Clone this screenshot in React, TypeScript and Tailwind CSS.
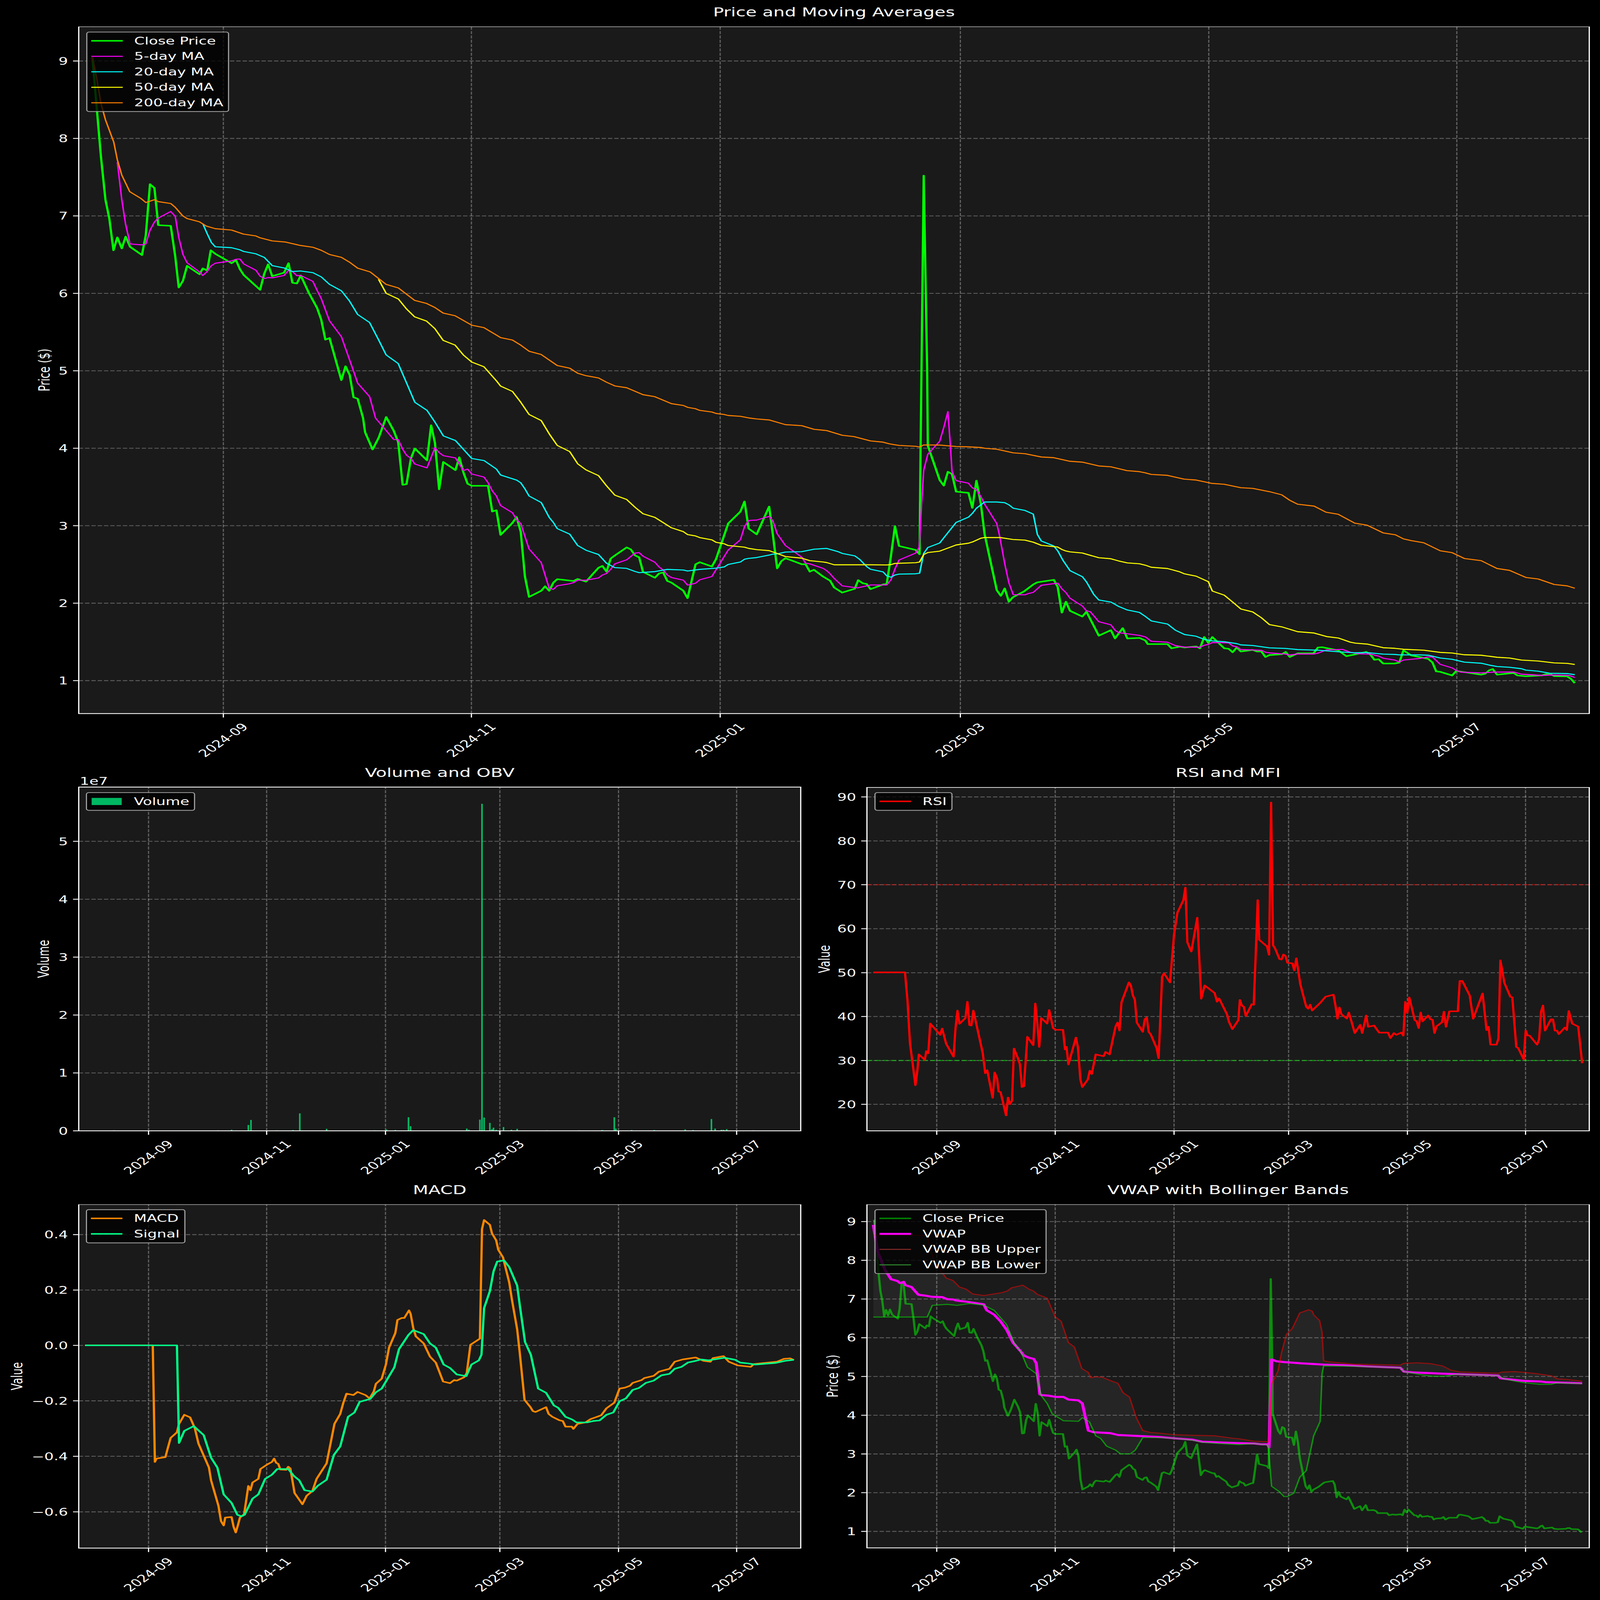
import type { ReactNode } from "react";

type Pt = [number, number];

// traced off crops of the plots, each crop has its own origin and scale
const crop = (ox: number, oy: number, sx: number, sy: number) => (pts: Pt[]): Pt[] =>
  pts.map(([x, y]) => [ox + x * sx, oy + y * sy]);
const z7 = crop(220, 200, 1300 / 1568, 1500 / 1568);
const z8 = crop(1100, 1300, 1300 / 1568, 1300 / 1568);
const z2 = crop(2300, 1500, 1000 / 1568, 1100 / 1568);
const z9 = crop(3200, 1900, 1270 / 1568, 1000 / 1568);
const zRsi = crop(2300, 3130, 2170 / 1568, 1600 / 1568);
const zVwap = crop(2300, 4850, 2170 / 1568, 1650 / 1568);
const zLeft = crop(0, 4700, 2300 / 1568, 1800 / 1568);

const close: Pt[] = [
  ...z7([[46,34],[60,240],[75,460],[90,640],[103,720],[117,855],[130,800],[145,847],[158,797],[173,840],[213,875],[226,790],[240,574],[255,590],[268,748],[310,751],[325,880],[337,1013],[351,985],[365,921],[407,957],[418,932],[433,941],[445,855],[460,870],[515,910],[530,897],[543,935],[556,960],[611,1023],[625,955],[638,915],[652,965],[692,950],[707,910],[720,993],[735,996],[748,962],[775,1035],[803,1100],[817,1150],[831,1235],[845,1228],[860,1295],[885,1407],[899,1348],[913,1385],[926,1480],[940,1486],[958,1568]]),
  [1020,1758],[1041,1828],[1058,1780],[1079,1696],
  ...z8([[0,545],[15,600],[30,810],[43,807],[58,680],[71,632],[112,690],[126,518],[139,605],[153,832],[167,698],[208,738],[221,675],[235,750],[249,805],[263,815],[318,815],[332,941],[346,935],[360,1056],[400,997],[414,968],[428,1040],[442,1260],[456,1360],[497,1330],[510,1308],[524,1330],[538,1290],[551,1273],[606,1282],[620,1272],[648,1285],[690,1217],[703,1208],[717,1236],[731,1172],[745,1157],[785,1117],[799,1127],[813,1156],[827,1166],[840,1237],[880,1266],[894,1245],[908,1240],[922,1282],[936,1290],[976,1330],[990,1366],[1017,1200],[1031,1190],[1072,1211],[1086,1175],[1127,1000],[1168,942],[1182,892],[1196,1025],[1223,1053],[1265,917],[1278,1060],[1292,1220],[1306,1185],[1320,1170],[1375,1200],[1388,1200],[1402,1236],[1416,1227]]),
  ...z2([[0,1205],[30,1228],[48,1268],[83,1297],[138,1275],[153,1225],[173,1243],[190,1247],[207,1277],[262,1250],[278,1247],[295,1100],[314,912],[332,1027],[405,1050],[422,1075],[426,500],[440,-1120],[455,0],[458,445],[510,645],[528,677],[546,597],[564,610],[582,712],[636,719],[653,806],[671,648],[690,780],[707,960],[760,1283],[778,1316],[795,1273],[813,1350],[830,1325],[880,1290],[920,1250],[937,1238],[1010,1223],[1027,1265],[1045,1413],[1063,1350],[1081,1403],[1135,1436],[1153,1408],[1185,1490],[1207,1547],[1260,1515],[1278,1563],[1312,1503],[1332,1563],[1385,1560]]),
  ...z9([[0,1105],[8,1128],[76,1128],[90,1155],[118,1145],[135,1150],[175,1143],[188,1155],[203,1083],[217,1120],[231,1083],[272,1155],[287,1158],[301,1180],[315,1150],[329,1175],[370,1165],[385,1175],[400,1175],[414,1210],[428,1198],[470,1193],[484,1178],[498,1210],[525,1187],[580,1187],[595,1150],[610,1148],[665,1168],[693,1205],[735,1190],[762,1178],[776,1195],[790,1228],[805,1225],[820,1252],[860,1252],[876,1246],[890,1168],[917,1200],[975,1222],[990,1245],[1003,1302],[1017,1305],[1058,1328],[1072,1300],[1100,1307],[1158,1323],[1172,1317],[1186,1295],[1198,1287],[1213,1323],[1270,1312],[1283,1328],[1312,1333],[1368,1328],[1380,1320],[1395,1318],[1410,1332],[1455,1334],[1468,1350],[1481,1377]]),
];

const ma5: Pt[] = [
  ...z7([[130,480],[145,640],[158,745],[173,828],[213,832],[226,828],[240,770],[255,735],[268,718],[310,690],[325,710],[337,800],[351,872],[365,908],[407,947],[418,962],[433,945],[445,922],[460,910],[515,900],[530,893],[543,892],[556,913],[597,940],[611,965],[625,975],[638,971],[652,972],[692,962],[707,940],[720,945],[735,963],[748,962],[789,987],[803,1025],[817,1060],[845,1155],[885,1222],[925,1365],[940,1420],[980,1477],[1000,1568]]),
  ...z8([[0,588],[15,588],[30,635],[43,665],[58,680],[71,708],[112,727],[139,628],[153,652],[167,667],[208,678],[235,740],[249,733],[263,757],[304,772],[318,800],[332,840],[346,865],[360,912],[400,947],[414,980],[428,1000],[456,1125],[497,1192],[524,1318],[538,1323],[551,1305],[590,1296],[606,1290],[620,1278],[648,1278],[690,1267],[703,1253],[717,1245],[731,1225],[745,1198],[785,1178],[813,1145],[827,1143],[840,1160],[880,1190],[894,1213],[908,1228],[922,1253],[936,1265],[976,1278],[990,1302],[1017,1293],[1031,1276],[1072,1260],[1127,1130],[1168,1080],[1182,1015],[1196,985],[1223,983],[1265,965],[1278,988],[1292,1050],[1320,1108],[1375,1165],[1388,1195],[1402,1198]]),
  ...z2([[0,1157],[15,1170],[30,1188],[48,1215],[83,1258],[150,1270],[207,1253],[278,1253],[297,1222],[314,1160],[332,1108],[405,1068],[420,1035],[430,800],[440,588],[458,495],[510,420],[528,340],[546,248],[556,430],[564,595],[582,648],[636,663],[653,690],[671,700],[690,740],[707,785],[760,897],[772,965],[795,1130],[813,1240],[832,1309],[884,1310],[900,1302],[920,1296],[955,1255],[1027,1242],[1045,1275],[1063,1297],[1081,1330],[1135,1375],[1153,1403],[1170,1408],[1207,1466],[1260,1484],[1278,1515],[1295,1530],[1385,1545]]),
  ...z9([[0,1082],[20,1110],[76,1116],[104,1138],[135,1147],[188,1148],[203,1135],[217,1130],[231,1118],[287,1120],[301,1140],[315,1145],[329,1163],[370,1165],[400,1168],[414,1180],[428,1184],[484,1192],[498,1198],[525,1191],[580,1191],[595,1186],[625,1165],[680,1162],[707,1180],[735,1190],[775,1192],[805,1205],[820,1218],[860,1230],[876,1242],[890,1230],[945,1220],[975,1210],[990,1210],[1017,1257],[1058,1280],[1072,1295],[1088,1307],[1158,1312],[1200,1307],[1270,1306],[1297,1320],[1368,1328],[1395,1325],[1455,1327],[1468,1332],[1481,1341]]),
];

const ma20: Pt[] = [
  ...z7([[418,742],[433,785],[447,822],[460,840],[515,844],[543,853],[556,860],[597,870],[625,885],[652,920],[692,930],[720,945],[748,943],[789,950],[817,968],[845,1000],[885,1027],[912,1070],[940,1128],[980,1162],[1010,1235],[1036,1300]]),
  ...z8([[15,215],[43,310],[71,405],[112,445],[140,505],[167,570],[208,593],[263,681],[304,691],[346,733],[360,762],[414,787],[428,800],[442,830],[456,865],[497,897],[524,970],[538,995],[551,1025],[593,1052],[620,1108],[648,1131],[690,1152],[717,1195],[745,1216],[785,1220],[813,1235],[827,1241],[880,1236],[922,1225],[976,1228],[990,1233],[1031,1225],[1086,1219],[1113,1213],[1127,1201],[1168,1189],[1182,1175],[1196,1171],[1223,1167],[1265,1155],[1278,1150],[1292,1149],[1320,1140],[1375,1138],[1416,1126]]),
  ...z2([[0,1042],[15,1041],[65,1060],[83,1070],[138,1084],[160,1105],[190,1146],[207,1162],[262,1177],[278,1200],[297,1208],[314,1195],[332,1190],[405,1188],[422,1185],[440,1070],[458,1036],[510,1010],[528,980],[582,890],[636,860],[653,838],[671,808],[707,772],[760,772],[795,776],[813,788],[832,808],[884,821],[920,842],[938,960],[955,998],[1010,1027],[1027,1055],[1050,1110],[1081,1170],[1135,1205],[1153,1235],[1185,1308],[1207,1340],[1260,1352],[1295,1378],[1332,1398],[1385,1412]]),
  ...z9([[0,952],[20,980],[76,1000],[104,1040],[135,1067],[175,1078],[203,1098],[231,1108],[272,1113],[315,1125],[329,1133],[370,1137],[428,1152],[484,1156],[525,1163],[595,1167],[665,1177],[720,1183],[762,1182],[820,1192],[860,1194],[876,1197],[945,1197],[975,1199],[990,1205],[1017,1217],[1058,1225],[1100,1243],[1158,1250],[1186,1262],[1213,1271],[1256,1276],[1297,1285],[1312,1294],[1355,1301],[1395,1314],[1455,1316],[1481,1323]]),
];

const ma50: Pt[] = [
  ...z7([[1010,978],[1036,1038],[1077,1062],[1105,1105],[1132,1138],[1172,1156],[1200,1188],[1228,1238],[1268,1258],[1296,1300]]),
  ...z8([[263,208],[304,231],[346,300],[360,326],[400,352],[428,405],[456,465],[497,495],[524,560],[551,617],[593,647],[620,707],[648,737],[690,765],[717,815],[745,861],[785,882],[813,920],[840,952],[880,970],[936,1021],[976,1040],[990,1054],[1017,1061],[1031,1069],[1072,1080],[1086,1092],[1113,1099],[1127,1108],[1182,1116],[1196,1122],[1223,1128],[1265,1133],[1292,1147],[1320,1162],[1375,1170],[1402,1182]]),
  ...z2([[0,1120],[15,1123],[48,1136],[138,1136],[207,1136],[278,1137],[297,1135],[314,1128],[405,1124],[422,1120],[440,1077],[458,1065],[510,1057],[582,1021],[636,1011],[653,1004],[690,982],[707,978],[775,978],[830,989],[884,993],[920,1005],[955,1023],[1027,1033],[1045,1047],[1063,1056],[1081,1061],[1135,1068],[1207,1095],[1260,1101],[1295,1114],[1332,1125],[1385,1130]]),
  ...z9([[0,625],[20,638],[76,646],[118,667],[135,680],[175,695],[217,730],[231,790],[272,816],[301,860],[329,904],[370,923],[400,960],[428,1004],[470,1018],[525,1049],[580,1057],[625,1080],[665,1089],[707,1116],[725,1122],[765,1128],[820,1151],[860,1155],[890,1161],[960,1167],[1017,1181],[1058,1185],[1100,1196],[1158,1199],[1213,1212],[1256,1217],[1297,1230],[1355,1236],[1410,1248],[1455,1251],[1481,1258]]),
];

const ma200: Pt[] = [
  ...z7([[46,34],[60,120],[75,232],[90,300],[118,395],[130,470],[145,535],[172,606],[210,635],[226,652],[255,640],[268,648],[310,656],[325,672],[350,708],[365,720],[407,734],[430,752],[460,763],[515,769],[555,786],[597,794],[611,802],[652,815],[697,820],[745,834],[789,842],[817,855],[845,873],[885,885],[912,905],[940,931],[982,947],[1036,1000],[1077,1015],[1105,1042],[1132,1068],[1172,1081],[1200,1098],[1228,1122],[1268,1133]]),
  ...z8([[263,27],[304,39],[360,88],[400,100],[428,125],[456,155],[497,171],[551,225],[593,238],[620,263],[648,275],[690,286],[717,307],[745,325],[785,334],[840,368],[880,378],[936,412],[976,421],[990,430],[1017,437],[1031,445],[1072,453],[1086,460],[1113,465],[1127,470],[1168,474],[1196,482],[1223,487],[1265,492],[1320,515],[1375,520],[1416,538]]),
  ...z2([[0,356],[15,358],[83,385],[135,393],[207,418],[262,425],[290,435],[332,444],[405,449],[422,453],[440,441],[510,442],[582,450],[636,452],[690,456],[710,461],[760,466],[832,487],[884,492],[955,511],[1010,515],[1081,536],[1135,541],[1207,563],[1260,568],[1330,590],[1385,596]]),
  ...z9([[0,36],[20,46],[76,52],[133,76],[175,82],[228,103],[272,109],[329,131],[370,135],[428,156],[470,176],[497,210],[525,236],[582,248],[623,287],[665,300],[722,357],[765,370],[820,419],[862,431],[890,457],[917,468],[960,482],[1017,533],[1058,545],[1100,582],[1158,596],[1213,646],[1256,658],[1312,703],[1355,713],[1410,748],[1455,757],[1481,772]]),
];

const rsi = zRsi([[101,808],[165,808],[170,920],[175,1090],[181,1180],[186,1258],[190,1200],[193,1135],[205,1157],[208,1122],[212,1130],[216,1012],[236,1057],[240,1032],[248,1092],[263,1144],[267,1030],[271,960],[275,1013],[287,990],[291,925],[295,1018],[299,1020],[303,960],[322,1130],[327,1210],[331,1198],[342,1308],[346,1207],[351,1232],[354,1283],[358,1285],[369,1378],[373,1307],[377,1333],[381,1320],[385,1112],[393,1150],[397,1175],[401,1265],[405,1262],[412,1065],[424,1098],[428,932],[432,1010],[436,1105],[440,990],[452,1012],[456,958],[464,1030],[469,1037],[484,1037],[488,1115],[491,1105],[495,1175],[510,1068],[514,1105],[519,1235],[523,1265],[534,1235],[538,1200],[542,1213],[550,1135],[566,1142],[570,1125],[578,1135],[590,1025],[594,1008],[598,1040],[602,928],[617,848],[621,860],[625,900],[629,917],[633,1008],[645,1045],[649,995],[653,988],[657,1045],[661,1055],[673,1110],[677,1150],[684,825],[688,812],[700,848],[708,660],[715,570],[727,520],[731,470],[735,688],[743,725],[755,590],[759,750],[763,913],[770,860],[790,890],[795,925],[799,912],[815,975],[819,1005],[826,1034],[838,998],[841,918],[845,940],[849,945],[853,982],[865,935],[869,937],[873,735],[877,520],[880,678],[896,705],[900,738],[904,131],[908,700],[912,712],[921,755],[925,757],[929,737],[933,742],[937,770],[947,772],[951,800],[955,752],[963,855],[975,945],[979,953],[983,937],[987,960],[1003,930],[1014,905],[1030,897],[1034,940],[1038,993],[1042,948],[1046,975],[1057,992],[1061,968],[1073,1050],[1084,1017],[1088,1050],[1096,980],[1100,1025],[1112,1020],[1122,1048],[1140,1048],[1145,1070],[1152,1050],[1157,1057],[1167,1048],[1171,1060],[1175,925],[1179,970],[1183,908],[1194,998],[1198,1003],[1202,1030],[1206,968],[1210,1003],[1221,980],[1226,995],[1230,997],[1234,1050],[1238,1023],[1249,1007],[1253,965],[1257,1025],[1264,963],[1281,963],[1285,842],[1290,842],[1305,900],[1312,993],[1331,892],[1339,1038],[1343,1025],[1347,1096],[1359,1096],[1363,1072],[1367,760],[1375,850],[1387,905],[1391,907],[1399,1105],[1403,1110],[1414,1155],[1418,1040],[1422,1060],[1426,1060],[1441,1096],[1445,1075],[1449,965],[1453,940],[1457,1040],[1469,995],[1473,995],[1477,1040],[1481,1040],[1485,1054],[1497,1028],[1501,1038],[1505,962],[1512,1012],[1524,1024],[1532,1170]]);

const macd = zLeft([[162,672],[291,672],[295,1085],[298,1073],[315,1068],[319,1040],[325,1000],[337,980],[341,950],[351,918],[362,927],[371,965],[378,1020],[398,1105],[402,1150],[416,1240],[421,1295],[426,1310],[429,1282],[441,1280],[445,1315],[449,1335],[453,1310],[457,1282],[465,1270],[473,1170],[477,1185],[481,1158],[492,1145],[496,1110],[508,1095],[518,1085],[522,1073],[526,1088],[530,1092],[534,1112],[545,1113],[549,1102],[553,1108],[561,1195],[576,1235],[580,1220],[584,1205],[595,1188],[603,1145],[622,1090],[637,950],[648,915],[654,875],[660,843],[673,848],[681,837],[696,848],[704,860],[712,835],[716,808],[727,790],[735,740],[741,680],[753,628],[757,582],[765,575],[770,575],[779,548],[782,560],[787,610],[792,640],[807,665],[819,712],[830,733],[844,800],[857,806],[865,795],[870,797],[884,785],[889,770],[896,670],[914,648],[918,260],[922,228],[933,245],[937,275],[945,300],[949,333],[958,360],[964,405],[970,450],[975,510],[985,615],[990,700],[999,865],[1010,890],[1015,905],[1020,908],[1040,891],[1045,915],[1052,925],[1065,937],[1072,940],[1077,960],[1089,960],[1092,968],[1100,950],[1115,945],[1125,933],[1145,920],[1155,895],[1170,875],[1180,825],[1190,822],[1200,815],[1205,805],[1222,795],[1227,788],[1245,780],[1255,765],[1275,755],[1285,730],[1300,722],[1325,715],[1340,727],[1353,730],[1358,717],[1378,710],[1388,730],[1405,743],[1430,748],[1436,738],[1480,730],[1493,720],[1505,718],[1512,724]]);

const signal = zLeft([[162,672],[337,672],[341,1018],[351,975],[369,958],[388,990],[402,1070],[414,1105],[426,1200],[441,1230],[452,1272],[460,1278],[466,1272],[481,1215],[492,1200],[505,1145],[518,1130],[528,1110],[549,1110],[560,1135],[570,1150],[580,1185],[595,1190],[605,1170],[622,1148],[636,1060],[648,1030],[663,925],[675,910],[685,872],[705,862],[716,838],[727,825],[735,800],[751,750],[760,685],[778,635],[787,618],[807,632],[819,665],[830,680],[845,740],[857,752],[870,775],[888,781],[898,740],[912,725],[917,705],[922,540],[933,480],[940,410],[947,375],[960,371],[970,395],[985,460],[990,530],[1000,660],[1011,705],[1025,825],[1040,840],[1055,885],[1063,893],[1077,925],[1090,935],[1098,945],[1118,945],[1130,940],[1142,938],[1155,918],[1168,910],[1180,870],[1192,860],[1205,830],[1217,823],[1230,805],[1245,797],[1260,778],[1275,773],[1285,755],[1298,748],[1310,733],[1325,727],[1335,722],[1350,725],[1380,716],[1400,723],[1410,733],[1425,736],[1438,740],[1478,734],[1495,727],[1512,723]]);

const vwap = zVwap([[101,125],[110,230],[125,300],[137,335],[150,342],[155,350],[162,345],[166,358],[178,365],[192,395],[205,398],[220,403],[240,404],[250,412],[262,413],[268,417],[290,422],[324,432],[330,455],[345,472],[358,498],[370,530],[383,580],[397,610],[405,630],[415,638],[425,643],[430,660],[437,780],[442,783],[455,785],[470,790],[485,790],[495,800],[515,803],[523,815],[535,920],[545,926],[580,930],[595,937],[640,941],[680,945],[710,950],[745,955],[765,963],[790,965],[830,968],[870,970],[885,973],[897,973],[900,985],[905,645],[915,652],[930,655],[965,660],[1010,665],[1050,667],[1100,672],[1165,677],[1172,692],[1190,695],[1250,700],[1300,703],[1363,707],[1367,718],[1395,724],[1415,728],[1448,730],[1460,733],[1532,737]]);

const bbUpper = zVwap([[101,165],[210,165],[215,210],[225,270],[248,330],[262,340],[275,365],[288,373],[302,392],[325,398],[340,393],[360,387],[372,380],[380,368],[403,358],[415,373],[424,380],[432,393],[452,408],[468,480],[480,497],[495,580],[507,597],[522,680],[535,695],[540,716],[550,712],[563,714],[580,727],[595,737],[605,773],[618,790],[632,870],[645,920],[660,927],[680,930],[710,936],[745,938],[790,940],[825,949],[840,952],[870,961],[900,963],[905,740],[918,690],[925,620],[935,548],[947,525],[962,465],[980,453],[987,458],[990,472],[1002,495],[1007,540],[1010,650],[1020,654],[1060,661],[1070,663],[1165,667],[1172,660],[1200,658],[1225,661],[1250,670],[1268,687],[1285,693],[1340,697],[1363,698],[1370,694],[1395,692],[1415,695],[1440,700],[1470,708],[1482,720],[1500,722],[1532,729]]);

const bbLower = zVwap([[101,481],[210,481],[220,436],[250,432],[270,436],[295,429],[324,435],[345,455],[370,510],[385,580],[400,620],[412,675],[430,700],[440,785],[452,815],[462,855],[485,882],[515,884],[523,870],[537,885],[550,940],[560,950],[572,980],[590,995],[600,1010],[620,1010],[630,995],[645,947],[680,947],[710,950],[745,957],[765,965],[800,970],[840,974],[870,970],[898,976],[905,1135],[920,1155],[930,1175],[937,1175],[950,1162],[962,1100],[975,1075],[990,940],[1003,885],[1007,700],[1010,670],[1070,671],[1165,677],[1172,692],[1190,698],[1210,705],[1230,710],[1255,710],[1280,702],[1340,706],[1363,708],[1375,720],[1400,730],[1415,735],[1445,741],[1470,741],[1480,736],[1532,738]]);

// same close series, moved onto the VWAP axes
const closeVwap: Pt[] = close.map(([x, y]) => [2616.7 + (x - 624) / 2.096, 4968.5 + (y - 248) / 2.001]);

// [crop x, crop y] of each bar top in the volume crop
const volumeBars: Pt[] = [[170,1484],[217,1483],[223,1484],[300,1484],[415,1483],[420,1484],[430,1484],[441,1481],[473,1465],[478,1448],[527,1483],[558,1482],[571,1426],[622,1478],[713,1483],[736,1480],[753,1482],[778,1439],[782,1469],[889,1477],[893,1481],[914,1447],[918,387],[922,1440],[933,1458],[937,1479],[940,1474],[945,1481],[959,1472],[974,1481],[985,1478],[1042,1483],[1103,1483],[1147,1482],[1170,1439],[1173,1477],[1203,1482],[1246,1482],[1305,1480],[1320,1482],[1355,1445],[1362,1477],[1374,1481],[1378,1481],[1384,1479],[1435,1483]];

const toPath = (pts: Pt[]) => pts.map(([x, y]) => `${x.toFixed(1)},${y.toFixed(1)}`).join(" ");

const dateLabels = ["2024-09", "2024-11", "2025-01", "2025-03", "2025-05", "2025-07"];
const topTicks = [624, 1317, 2012, 2683, 3377, 4070];
const leftTicks = [415, 745, 1077, 1396.5, 1728, 2058];
const rightTicks = [2617, 2948, 3280, 3600, 3932, 4262];

type Box = { left: number; right: number; top: number; bottom: number };

function Series({ pts, color, width, opacity = 1 }: { pts: Pt[]; color: string; width: number; opacity?: number }) {
  return <polyline points={toPath(pts)} fill="none" stroke={color} strokeWidth={width} strokeOpacity={opacity} strokeLinejoin="round" />;
}

function Axes({ box, xTicks, yTicks, yLabel, labelX, children }: {
  box: Box;
  xTicks: number[];
  yTicks: [string, number][];
  yLabel: string;
  labelX: number;
  children: ReactNode;
}) {
  const { left, right, top, bottom } = box;
  return (
    <>
      <rect x={left} y={top} width={right - left} height={bottom - top} fill="#1a1a1a" />
      <g stroke="#fff" strokeOpacity={0.3} strokeWidth={3.33} strokeDasharray="12.3 5.3">
        {xTicks.map((x) => <line key={x} x1={x} x2={x} y1={bottom} y2={top} />)}
        {yTicks.map(([, y]) => <line key={y} x1={left} x2={right} y1={y} y2={y} />)}
      </g>
      {children}
      <rect x={left} y={top} width={right - left} height={bottom - top} fill="none" stroke="#fff" strokeWidth={3.33} />
      <g stroke="#fff" strokeWidth={3.33}>
        {xTicks.map((x) => <line key={x} x1={x} x2={x} y1={bottom} y2={bottom + 16} />)}
        {yTicks.map(([, y]) => <line key={y} x1={left - 16} x2={left} y1={y} y2={y} />)}
      </g>
      <g fill="#fff" fontSize={41.67}>
        {xTicks.map((x, i) => (
          <text key={x} transform={`translate(${x} ${bottom + 108}) rotate(-45)`} textAnchor="middle" dominantBaseline="central">
            {dateLabels[i]}
          </text>
        ))}
        {yTicks.map(([label, y]) => (
          <text key={y} x={left - 30} y={y + 15.5} textAnchor="end">{label}</text>
        ))}
        <text transform={`translate(${labelX} ${(top + bottom) / 2}) rotate(-90)`} textAnchor="middle" dominantBaseline="central">
          {yLabel}
        </text>
      </g>
    </>
  );
}

function LegendRow({ label, swatch }: { label: string; swatch: string }) {
  return (
    <div className="flex h-[62.8px] items-center gap-[32px]">
      <div className="flex w-[88px] justify-center">
        <div className={swatch} />
      </div>
      <span>{label}</span>
    </div>
  );
}

function Legend({ className, rows }: { className: string; rows: [string, string][] }) {
  return (
    <div className={`absolute w-max rounded-[8px] border-[3.3px] border-[#a8a8a8] bg-black/80 py-[3px] pl-[11px] pr-[13px] text-[41.67px] leading-none text-white ${className}`}>
      {rows.map(([label, swatch]) => <LegendRow key={label} label={label} swatch={swatch} />)}
    </div>
  );
}

function Panel({ title, titleClass, viewBox, svgClass, legend, children }: {
  title: string;
  titleClass: string;
  viewBox: string;
  svgClass: string;
  legend: ReactNode;
  children: ReactNode;
}) {
  return (
    <section>
      <h2 className={`flex items-end justify-center pb-[33px] text-[50px] leading-none text-white ${titleClass}`}>{title}</h2>
      <div className="relative">
        <svg viewBox={viewBox} className={svgClass}>{children}</svg>
        {legend}
      </div>
    </section>
  );
}

export default function App() {
  const topBox = { left: 220, right: 4440, top: 108, bottom: 2902 };
  const volBox = { left: 220, right: 2237, top: 3201, bottom: 4599 };
  const rsiBox = { left: 2422, right: 4440, top: 3202, bottom: 4599 };
  const macdBox = { left: 220, right: 2237, top: 4898, bottom: 6296 };
  const vwapBox = { left: 2422, right: 4440, top: 4898, bottom: 6295 };

  // the page is laid out at 4470x6507; fit it to whatever window it really gets
  const fit = `scale(${window.innerWidth / 4470}, ${window.innerHeight / 6507})`;

  return (
    <div className="h-screen w-screen overflow-hidden bg-black">
      <div className="h-[6507px] w-[4470px] origin-top-left bg-black font-['DejaVu_Sans',sans-serif]" style={{ transform: fit }}>
        <Panel
          title="Price and Moving Averages"
          titleClass="h-[108px] pl-[220px] pr-[30px]"
          viewBox="0 108 4470 3007"
          svgClass="h-[3007px] w-[4470px]"
          legend={
            <Legend
              className="left-[241px] top-[21px]"
              rows={[
                ["Close Price", "h-[6px] w-[88px] bg-[#00ff00]"],
                ["5-day MA", "h-[4px] w-[88px] bg-[#ff00ff]"],
                ["20-day MA", "h-[4px] w-[88px] bg-[#00ffff]"],
                ["50-day MA", "h-[4px] w-[88px] bg-[#ffff00]"],
                ["200-day MA", "h-[4px] w-[88px] bg-[#ff8000]"],
              ]}
            />
          }
        >
          <Axes
            box={topBox}
            xTicks={topTicks}
            yTicks={[["9", 248], ["8", 563], ["7", 878], ["6", 1193], ["5", 1508], ["4", 1823], ["3", 2138], ["2", 2453], ["1", 2768]]}
            yLabel="Price ($)"
            labelX={125}
          >
            <Series pts={close} color="#00ff00" width={6.25} />
            <Series pts={ma5} color="#ff00ff" width={4.17} />
            <Series pts={ma20} color="#00ffff" width={4.17} />
            <Series pts={ma50} color="#ffff00" width={4.17} />
            <Series pts={ma200} color="#ff8000" width={4.17} />
          </Axes>
        </Panel>

        <div className="grid grid-cols-[2270px_2200px]">
          <Panel
            title="Volume and OBV"
            titleClass="h-[86px] pl-[220px] pr-[33px]"
            viewBox="0 3201 2270 1611"
            svgClass="h-[1611px] w-[2270px] overflow-visible"
            legend={
              <Legend
                className="left-[240px] top-[21px]"
                rows={[["Volume", "h-[29px] w-[84px] bg-[#00b862]"]]}
              />
            }
          >
            <Axes
              box={volBox}
              xTicks={leftTicks}
              yTicks={[["0", 4599], ["1", 4363.5], ["2", 4128], ["3", 3892.5], ["4", 3657], ["5", 3421.5]]}
              yLabel="Volume"
              labelX={122}
            >
              {volumeBars.map(([x, y]) => {
                const top = 2800 + y * (1900 / 1568);
                return <rect key={x} x={x * (2300 / 1568) - 2.2} y={top} width={4.4} height={4599 - top} fill="#00ff88" fillOpacity={0.7} />;
              })}
            </Axes>
            <text x={223} y={3191} fill="#fff" fontSize={41.67}>1e7</text>
          </Panel>

          <Panel
            title="RSI and MFI"
            titleClass="h-[86px] pl-[152px] pr-[30px]"
            viewBox="2270 3201 2200 1611"
            svgClass="h-[1611px] w-[2200px]"
            legend={
              <Legend
                className="left-[173px] top-[21px]"
                rows={[["RSI", "h-[6px] w-[88px] bg-[#ff0000]"]]}
              />
            }
          >
            <Axes
              box={rsiBox}
              xTicks={rightTicks}
              yTicks={[["90", 3241], ["80", 3420], ["70", 3598], ["60", 3777], ["50", 3956], ["40", 4134], ["30", 4313], ["20", 4491]]}
              yLabel="Value"
              labelX={2304}
            >
              <line x1={2422} x2={4440} y1={3598} y2={3598} stroke="#ff0000" strokeOpacity={0.5} strokeWidth={4.17} strokeDasharray="15.4 6.7" />
              <line x1={2422} x2={4440} y1={4313} y2={4313} stroke="#00ff00" strokeOpacity={0.5} strokeWidth={4.17} strokeDasharray="15.4 6.7" />
              <Series pts={rsi} color="#ff0000" width={6.25} />
            </Axes>
          </Panel>

          <Panel
            title="MACD"
            titleClass="h-[86px] pl-[220px] pr-[33px]"
            viewBox="0 4898 2270 1609"
            svgClass="h-[1609px] w-[2270px]"
            legend={
              <Legend
                className="left-[240px] top-[20px]"
                rows={[
                  ["MACD", "h-[6px] w-[88px] bg-[#ff8800]"],
                  ["Signal", "h-[6px] w-[88px] bg-[#00ff88]"],
                ]}
              />
            }
          >
            <Axes
              box={macdBox}
              xTicks={leftTicks}
              yTicks={[["0.4", 5021], ["0.2", 5246.5], ["0.0", 5471.5], ["−0.2", 5697], ["−0.4", 5922.5], ["−0.6", 6148.5]]}
              yLabel="Value"
              labelX={48}
            >
              <Series pts={macd} color="#ff8800" width={6.25} />
              <Series pts={signal} color="#00ff88" width={6.25} />
            </Axes>
          </Panel>

          <Panel
            title="VWAP with Bollinger Bands"
            titleClass="h-[86px] pl-[152px] pr-[30px]"
            viewBox="2270 4898 2200 1609"
            svgClass="h-[1609px] w-[2200px]"
            legend={
              <Legend
                className="left-[173px] top-[20px]"
                rows={[
                  ["Close Price", "h-[6px] w-[88px] bg-[#008000]"],
                  ["VWAP", "h-[8px] w-[88px] bg-[#ff00ff]"],
                  ["VWAP BB Upper", "h-[4px] w-[88px] bg-[#8a2b2b]"],
                  ["VWAP BB Lower", "h-[4px] w-[88px] bg-[#2e8b2e]"],
                ]}
              />
            }
          >
            <Axes
              box={vwapBox}
              xTicks={rightTicks}
              yTicks={[["9", 4968], ["8", 5125.5], ["7", 5283], ["6", 5440.5], ["5", 5598], ["4", 5755.5], ["3", 5913], ["2", 6070.5], ["1", 6228]]}
              yLabel="Price ($)"
              labelX={2327}
            >
              <polygon points={toPath([...bbUpper, ...[...bbLower].reverse()])} fill="#fff" fillOpacity={0.05} />
              <Series pts={closeVwap} color="#00ff00" width={6.25} opacity={0.5} />
              <Series pts={vwap} color="#ff00ff" width={8.33} />
              <Series pts={bbUpper} color="#ff0000" width={4.17} opacity={0.5} />
              <Series pts={bbLower} color="#00ff00" width={4.17} opacity={0.5} />
            </Axes>
          </Panel>
        </div>
      </div>
    </div>
  );
}
